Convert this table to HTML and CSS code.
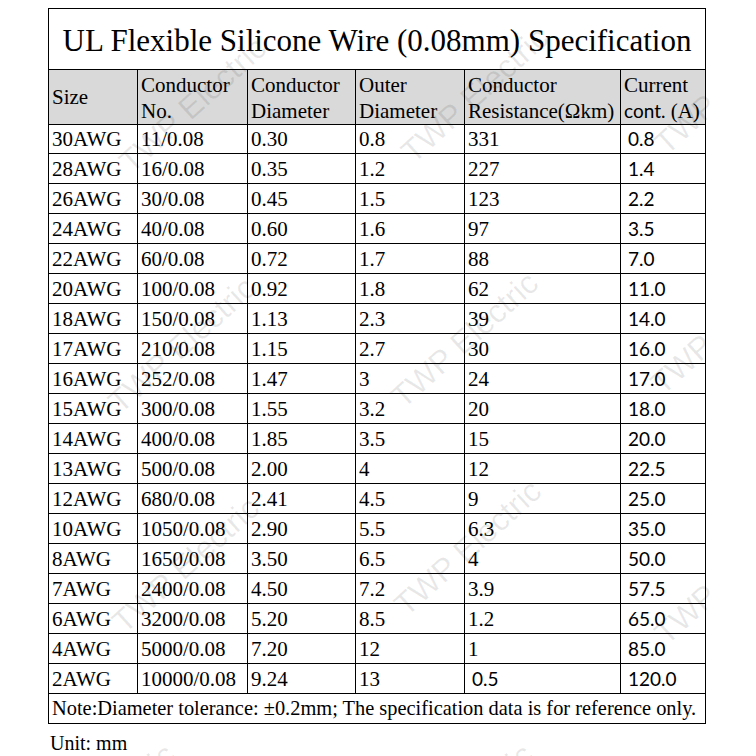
FILE: index.html
```html
<!DOCTYPE html>
<html lang="en">
<head>
<meta charset="utf-8">
<title>UL Flexible Silicone Wire Specification</title>
<link rel="stylesheet" href="styles.css">
</head>
<body>
<div class="page">
  <div class="sheet">
    <div class="title">UL Flexible Silicone Wire (0.08mm) Specification</div>
    <div class="row head">
      <div class="cell">Size</div>
      <div class="cell">Conductor<br>No.</div>
      <div class="cell">Conductor<br>Diameter</div>
      <div class="cell">Outer<br>Diameter</div>
      <div class="cell">Conductor<br>Resistance(Ωkm)</div>
      <div class="cell">Current<br><span class="sans">cont.</span> (A)</div>
    </div>
    <div class="row"><div class="cell">30AWG</div><div class="cell">11/0.08</div><div class="cell">0.30</div><div class="cell">0.8</div><div class="cell">331</div><div class="cell sans">0.8</div></div>
    <div class="row"><div class="cell">28AWG</div><div class="cell">16/0.08</div><div class="cell">0.35</div><div class="cell">1.2</div><div class="cell">227</div><div class="cell sans">1.4</div></div>
    <div class="row"><div class="cell">26AWG</div><div class="cell">30/0.08</div><div class="cell">0.45</div><div class="cell">1.5</div><div class="cell">123</div><div class="cell sans">2.2</div></div>
    <div class="row"><div class="cell">24AWG</div><div class="cell">40/0.08</div><div class="cell">0.60</div><div class="cell">1.6</div><div class="cell">97</div><div class="cell sans">3.5</div></div>
    <div class="row"><div class="cell">22AWG</div><div class="cell">60/0.08</div><div class="cell">0.72</div><div class="cell">1.7</div><div class="cell">88</div><div class="cell sans">7.0</div></div>
    <div class="row"><div class="cell">20AWG</div><div class="cell">100/0.08</div><div class="cell">0.92</div><div class="cell">1.8</div><div class="cell">62</div><div class="cell sans">11.0</div></div>
    <div class="row"><div class="cell">18AWG</div><div class="cell">150/0.08</div><div class="cell">1.13</div><div class="cell">2.3</div><div class="cell">39</div><div class="cell sans">14.0</div></div>
    <div class="row"><div class="cell">17AWG</div><div class="cell">210/0.08</div><div class="cell">1.15</div><div class="cell">2.7</div><div class="cell">30</div><div class="cell sans">16.0</div></div>
    <div class="row"><div class="cell">16AWG</div><div class="cell">252/0.08</div><div class="cell">1.47</div><div class="cell">3</div><div class="cell">24</div><div class="cell sans">17.0</div></div>
    <div class="row"><div class="cell">15AWG</div><div class="cell">300/0.08</div><div class="cell">1.55</div><div class="cell">3.2</div><div class="cell">20</div><div class="cell sans">18.0</div></div>
    <div class="row"><div class="cell">14AWG</div><div class="cell">400/0.08</div><div class="cell">1.85</div><div class="cell">3.5</div><div class="cell">15</div><div class="cell sans">20.0</div></div>
    <div class="row"><div class="cell">13AWG</div><div class="cell">500/0.08</div><div class="cell">2.00</div><div class="cell">4</div><div class="cell">12</div><div class="cell sans">22.5</div></div>
    <div class="row"><div class="cell">12AWG</div><div class="cell">680/0.08</div><div class="cell">2.41</div><div class="cell">4.5</div><div class="cell">9</div><div class="cell sans">25.0</div></div>
    <div class="row"><div class="cell">10AWG</div><div class="cell">1050/0.08</div><div class="cell">2.90</div><div class="cell">5.5</div><div class="cell">6.3</div><div class="cell sans">35.0</div></div>
    <div class="row"><div class="cell">8AWG</div><div class="cell">1650/0.08</div><div class="cell">3.50</div><div class="cell">6.5</div><div class="cell">4</div><div class="cell sans">50.0</div></div>
    <div class="row"><div class="cell">7AWG</div><div class="cell">2400/0.08</div><div class="cell">4.50</div><div class="cell">7.2</div><div class="cell">3.9</div><div class="cell sans">57.5</div></div>
    <div class="row"><div class="cell">6AWG</div><div class="cell">3200/0.08</div><div class="cell">5.20</div><div class="cell">8.5</div><div class="cell">1.2</div><div class="cell sans">65.0</div></div>
    <div class="row"><div class="cell">4AWG</div><div class="cell">5000/0.08</div><div class="cell">7.20</div><div class="cell">12</div><div class="cell">1</div><div class="cell sans">85.0</div></div>
    <div class="row"><div class="cell">2AWG</div><div class="cell">10000/0.08</div><div class="cell">9.24</div><div class="cell">13</div><div class="cell sans">0.5</div><div class="cell sans">120.0</div></div>
    <div class="note">Note:Diameter tolerance: ±0.2mm; The specification data is for reference only.</div>
  </div>
  <div class="unit">Unit: mm</div>

  <span class="wm" style="left:193px;top:105px">TWP Electric</span>
  <span class="wm" style="left:475px;top:95px">TWP Electric</span>
  <span class="wm wm-edge" style="left:672px;top:162px">TWP</span>
  <span class="wm" style="left:182px;top:345px">TWP Electric</span>
  <span class="wm" style="left:465px;top:340px">TWP Electric</span>
  <span class="wm wm-edge" style="left:668px;top:402px">TWP</span>
  <span class="wm" style="left:186px;top:565px">TWP Electric</span>
  <span class="wm" style="left:468px;top:548px">TWP Electric</span>
  <span class="wm wm-edge" style="left:672px;top:652px">TWP</span>
  <span class="wm" style="left:102px;top:812px">TWP Electric</span>
  <span class="wm" style="left:460px;top:812px">TWP Electric</span>
</div>
</body>
</html>
```
FILE: styles.css
```css
html, body {
  margin: 0;
  padding: 0;
  background: #fff;
}
body {
  overflow: hidden;
}
.page {
  position: relative;
  width: 756px;
  height: 756px;
  padding: 8px 0 0 48px;
  box-sizing: border-box;
  font-family: "Liberation Serif", "Times New Roman", serif;
  color: #000;
  overflow: hidden;
}
.sheet {
  width: 658px;
  border-left: 1px solid #000;
  border-top: 1px solid #000;
  box-sizing: border-box;
}
.title {
  height: 61px;
  box-sizing: border-box;
  border-right: 1px solid #000;
  border-bottom: 1px solid #000;
  display: flex;
  align-items: center;
  justify-content: center;
  padding-top: 4px;
  font-size: 31px;
  white-space: nowrap;
}
.row {
  display: grid;
  grid-template-columns: 89px 110px 108px 109px 156px 85px;
  height: 30px;
}
.row.head {
  height: 54px;
  background: #d9d9d9;
}
.cell {
  box-sizing: border-box;
  border-right: 1px solid #000;
  border-bottom: 1px solid #000;
  display: flex;
  align-items: center;
  padding-left: 3px;
  font-size: 21px;
  white-space: nowrap;
  line-height: 26px;
}
.head .cell {
  display: block;
  padding-top: 2px;
}
.head .cell:first-child {
  display: flex;
  align-items: center;
  padding-top: 0;
}
.sans {
  font-family: Lato, "Liberation Sans", sans-serif;
  font-size: 19px;
}
.cell.sans {
  padding-left: 7px;
}
.head .sans {
  font-size: 19px;
}
.note {
  height: 30px;
  box-sizing: border-box;
  border-right: 1px solid #000;
  border-bottom: 1px solid #000;
  display: flex;
  align-items: center;
  padding-left: 3px;
  font-size: 20.4px;
  white-space: nowrap;
}
.unit {
  margin: 8px 0 0 2px;
  font-size: 20px;
}
.wm {
  position: absolute;
  transform: translate(-50%, -50%) rotate(-42deg);
  font-family: "Liberation Sans", Arial, sans-serif;
  font-size: 32px;
  color: rgba(0, 0, 0, 0.09);
  white-space: nowrap;
  pointer-events: none;
}
.wm-edge {
  transform-origin: 0 100%;
  transform: translate(0, -100%) rotate(-42deg);
}
```
